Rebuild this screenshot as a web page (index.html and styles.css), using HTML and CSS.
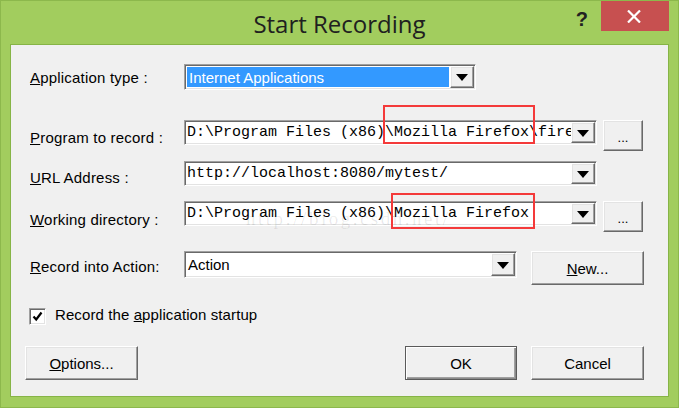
FILE: index.html
```html
<!DOCTYPE html>
<html>
<head>
<meta charset="utf-8">
<link rel="stylesheet" href="styles.css">
</head>
<body>
<div class="window">
  <div class="titlebar">
    <div></div>
    <div class="title">Start Recording</div>
    <div class="caption">
      <span class="help">?</span>
      <span class="close"><svg width="14" height="13" viewBox="0 0 14 13"><path d="M1 0.5 L13 12.5 M13 0.5 L1 12.5" stroke="#fff" stroke-width="2.2" fill="none"/></svg></span>
    </div>
  </div>
  <div class="client">
    <div class="row r1">
      <span class="lbl"><u>A</u>pplication type :</span>
      <div class="combo w292 h26">
        <div class="field sel"><span class="seltext">Internet Applications</span></div>
        <div class="drop"><svg width="12" height="7" viewBox="0 0 12 7"><polygon points="0,0 12,0 6,7" fill="#000"/></svg></div>
      </div>
    </div>
    <div class="row r2">
      <span class="lbl"><u>P</u>rogram to record :</span>
      <div class="combo w413 h25">
        <div class="field mono">D:\Program Files (x86)\Mozilla Firefox\firefox.exe</div>
        <div class="drop"><svg width="12" height="7" viewBox="0 0 12 7"><polygon points="0,0 12,0 6,7" fill="#000"/></svg></div>
      </div>
      <button class="btn dots">...</button>
    </div>
    <div class="row r3">
      <span class="lbl"><u>U</u>RL Address :</span>
      <div class="combo w413 h25">
        <div class="field mono">http://localhost:8080/mytest/</div>
        <div class="drop"><svg width="12" height="7" viewBox="0 0 12 7"><polygon points="0,0 12,0 6,7" fill="#000"/></svg></div>
      </div>
    </div>
    <div class="row r4">
      <span class="lbl"><u>W</u>orking directory :</span>
      <div class="combo w413 h25">
        <div class="field mono">D:\Program Files (x86)\Mozilla Firefox</div>
        <div class="drop"><svg width="12" height="7" viewBox="0 0 12 7"><polygon points="0,0 12,0 6,7" fill="#000"/></svg></div>
      </div>
      <button class="btn dots">...</button>
    </div>
    <div class="row r5">
      <span class="lbl"><u>R</u>ecord into Action:</span>
      <div class="combo w333 h27">
        <div class="field">Action</div>
        <div class="drop"><svg width="12" height="7" viewBox="0 0 12 7"><polygon points="0,0 12,0 6,7" fill="#000"/></svg></div>
      </div>
      <button class="btn newbtn"><u>N</u>ew...</button>
    </div>
    <div class="row r6">
      <span class="check"><svg width="11" height="11" viewBox="0 0 11 11"><path d="M1.5 5.5 L4.2 8.5 L9.5 1.5" stroke="#000" stroke-width="2.2" fill="none"/></svg></span>
      <span class="checklbl">Record the <u>a</u>pplication startup</span>
    </div>
    <div class="row r7">
      <button class="btn wide"><u>O</u>ptions...</button>
      <button class="btn wide ok">OK</button>
      <button class="btn wide cancel">Cancel</button>
    </div>
  </div>
  <div class="watermark">http://blog.csdn.net/</div>
  <div class="anno a1"></div>
  <div class="anno a2"></div>
</div>
</body>
</html>
```
FILE: styles.css
```css
* { box-sizing: border-box; }
html, body { margin: 0; padding: 0; background: #a2cd5e; }
.window {
  position: relative;
  width: 679px;
  height: 408px;
  background: #a2cd5e;
  border: 1px solid #8cb84c;
  padding: 0 9px 10px 9px;
  font-family: "Liberation Sans", Arial, sans-serif;
}
.titlebar {
  height: 43px;
  display: grid;
  grid-template-columns: 1fr auto 1fr;
}
.title {
  font-family: "Open Sans", sans-serif;
  font-size: 24px;
  line-height: 43px;
  padding-top: 1px;
  color: #202020;
}
.caption {
  display: flex;
  justify-content: flex-end;
  align-items: flex-start;
}
.help {
  font: bold 20px/20px "Liberation Sans", sans-serif;
  color: #222;
  margin-top: 8px;
  margin-right: 13px;
}
.close {
  width: 68px;
  height: 30px;
  background: #c75050;
  display: flex;
  align-items: center;
  justify-content: center;
  padding-right: 2px;
}
.client {
  width: 659px;
  height: 353px;
  background: #f0f0f0;
  border: 1px solid #86b446;
  display: flex;
  flex-direction: column;
}
.row {
  display: flex;
  align-items: flex-start;
  padding-left: 19px;
}
.lbl {
  flex: none;
  width: 154px;
  font-size: 15px;
  line-height: 18px;
  letter-spacing: 0.2px;
  color: #000;
}
.r1 { margin-top: 19px; }
.r1 .lbl { margin-top: 5px; }
.r2 { margin-top: 30px; }
.r2 .lbl { margin-top: 9px; }
.r3 { margin-top: 10px; }
.r3 .lbl { margin-top: 8px; }
.r4 { margin-top: 14px; }
.r4 .lbl { margin-top: 10px; }
.r5 { margin-top: 19px; }
.r5 .lbl { margin-top: 7px; }
.r6 { margin-top: 21px; padding-left: 18px; }
.r7 { margin-top: 21px; padding-left: 14px; padding-right: 24px; }

.combo {
  flex: none;
  display: flex;
  border: 1px solid;
  border-color: #a0a0a0 #ffffff #ffffff #a0a0a0;
  box-shadow: inset 1px 1px 0 #696969, inset -1px -1px 0 #e3e3e3;
  padding: 1px;
  background: #fff;
}
.w292 { width: 292px; }
.w413 { width: 413px; }
.w333 { width: 333px; }
.h25 { height: 25px; }
.h26 { height: 26px; }
.h27 { height: 27px; }
.field {
  flex: 1;
  min-width: 0;
  overflow: hidden;
  white-space: nowrap;
  padding-left: 2px;
  font-size: 15px;
  display: flex;
  align-items: center;
  color: #000;
}
.field.mono {
  font-family: "Liberation Mono", monospace;
  font-size: 15px;
  padding-left: 1px;
}
.field.sel {
  padding: 1px;
  align-items: stretch;
}
.seltext {
  flex: 1;
  background: #3399ff;
  color: #fff;
  display: flex;
  align-items: center;
  padding-left: 2px;
}
.drop {
  flex: none;
  width: 24px;
  background: #f0f0f0;
  border: 1px solid;
  border-color: #ffffff #696969 #696969 #ffffff;
  box-shadow: inset -1px -1px 0 #a0a0a0, inset 1px 1px 0 #e3e3e3;
  display: flex;
  align-items: center;
  justify-content: center;
  padding-top: 1px;
}
.btn {
  flex: none;
  background: #f0f0f0;
  border: 1px solid;
  border-color: #ffffff #696969 #696969 #ffffff;
  box-shadow: inset -1px -1px 0 #a0a0a0, inset 1px 1px 0 #e3e3e3;
  font-family: "Liberation Sans", Arial, sans-serif;
  font-size: 15px;
  color: #000;
  padding: 0;
  margin: 0;
}
.dots {
  width: 40px;
  height: 31px;
  margin-left: 6px;
  font-size: 13px;
  padding-top: 4px;
}
.newbtn {
  width: 113px;
  height: 34px;
  margin-left: 14px;
}
.wide {
  width: 113px;
  height: 34px;
}
.ok {
  width: 112px;
  margin-left: auto;
  border: 1px solid #5a5a5a;
  box-shadow: inset 1px 1px 0 #ffffff, inset -1px -1px 0 #8a8a8a, inset -2px -2px 0 #a0a0a0;
}
.cancel { margin-left: 14px; }
.check {
  flex: none;
  width: 17px;
  height: 17px;
  margin-top: 2px;
  background: #fff;
  border: 1px solid;
  border-color: #a0a0a0 #ffffff #ffffff #a0a0a0;
  box-shadow: inset 1px 1px 0 #696969, inset -1px -1px 0 #e3e3e3;
  display: flex;
  align-items: center;
  justify-content: center;
}
.checklbl {
  margin-left: 9px;
  font-size: 15px;
  line-height: 18px;
  letter-spacing: 0.1px;
}
.watermark {
  position: absolute;
  left: 245px;
  top: 207px;
  font-family: "Liberation Serif", serif;
  font-size: 19px;
  letter-spacing: 2.5px;
  color: rgba(0, 0, 0, 0.09);
  pointer-events: none;
}
.anno {
  position: absolute;
  border: 2px solid #f43a3a;
}
.a1 { left: 382px; top: 104px; width: 152px; height: 39px; }
.a2 { left: 390px; top: 192px; width: 144px; height: 36px; }
```
